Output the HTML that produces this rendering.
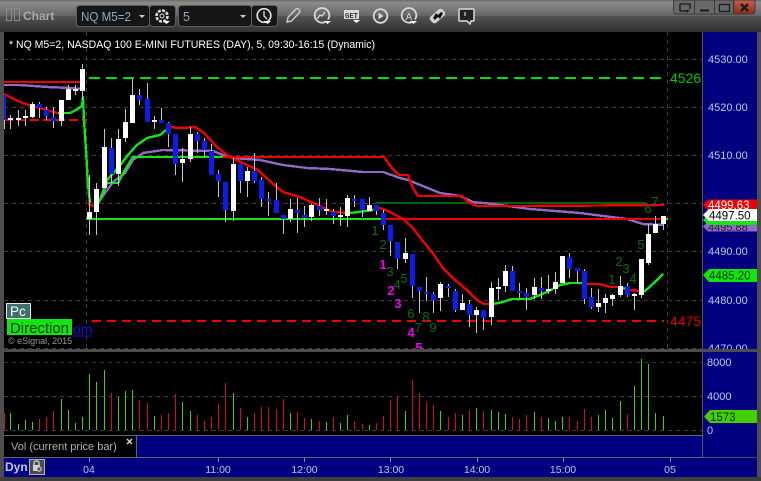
<!DOCTYPE html>
<html><head><meta charset="utf-8"><style>
html,body{margin:0;padding:0;background:#4a4a4a;width:761px;height:481px;overflow:hidden}
svg{display:block}
text{font-family:"Liberation Sans",sans-serif}
</style></head><body>
<svg width="761" height="481" viewBox="0 0 761 481" xmlns="http://www.w3.org/2000/svg">
<defs>
<linearGradient id="tb" x1="0" y1="0" x2="0" y2="1">
<stop offset="0" stop-color="#6a6a6a"/><stop offset=".08" stop-color="#8c8c8c"/><stop offset=".5" stop-color="#636363"/><stop offset=".51" stop-color="#525252"/><stop offset="1" stop-color="#303030"/>
</linearGradient>
<linearGradient id="cl" x1="0" y1="0" x2="0" y2="1"><stop offset="0" stop-color="#c8624c"/><stop offset="1" stop-color="#8c2c1c"/></linearGradient>
<clipPath id="pc"><rect x="4" y="32" width="698" height="317"/></clipPath>
</defs>
<rect width="761" height="481" fill="#4d4d4d"/>
<rect width="761" height="32" fill="url(#tb)"/>
<!-- title -->
<g fill="none" stroke="#8a8a8a" stroke-width="1"><rect x="6.5" y="8.5" width="5" height="12"/><rect x="14.5" y="8.5" width="5" height="12"/></g>
<text x="23" y="20" font-size="12" font-weight="bold" fill="#a8a8a8">Chart</text>
<!-- dropdowns -->
<g fill="#161616" stroke="#5e5e5e"><rect x="76.5" y="5.5" width="73" height="21" rx="3"/><rect x="149.5" y="5.5" width="26" height="21" rx="3"/><rect x="178.5" y="5.5" width="73" height="21" rx="3"/><rect x="251.5" y="5.5" width="26" height="21" rx="3"/></g>
<text x="81" y="21" font-size="12.500" fill="#8fa8c8" textLength="50" lengthAdjust="spacingAndGlyphs">NQ M5=2</text>
<text x="183" y="21" font-size="12.500" fill="#8fa8c8">5</text>
<path d="M139 15h6l-3 3zM240 15h6l-3 3z" fill="#ccc"/>
<!-- gear -->
<circle cx="162" cy="16" r="5.5" fill="none" stroke="#ddd" stroke-width="2.6" stroke-dasharray="3 1.3"/><circle cx="162" cy="16" r="2" fill="none" stroke="#ddd"/><path d="M163 21h7l-3.500 3z" fill="#fff"/>
<!-- clock -->
<circle cx="264" cy="15.500" r="6.800" fill="none" stroke="#e0e0e0" stroke-width="1.700"/><path d="M264 11v5l3 3" fill="none" stroke="#e0e0e0" stroke-width="1.300"/><path d="M264 21h7l-3.500 3z" fill="#fff"/>
<!-- pencil -->
<path d="M287 22l1-4.500 8-8.500q1.500-1 3 .5t.5 3l-8 8.500z" fill="none" stroke="#c8c8c8" stroke-width="1.500"/>
<!-- gauge -->
<path d="M325 22a7.300 7.300 0 1 1 3-2.500" fill="none" stroke="#d8d8d8" stroke-width="1.800"/><path d="M317 19l3-4 2 1 3-4" fill="none" stroke="#d8d8d8" stroke-width="1.300"/><path d="M324 21h7l-3.500 3z" fill="#fff"/>
<!-- GET -->
<rect x="344" y="10" width="15" height="9" fill="#d8d8d8"/><text x="345" y="18" font-size="7.500" font-weight="bold" style="font-family:'Liberation Mono',monospace" fill="#333" textLength="13" lengthAdjust="spacingAndGlyphs">GET</text><path d="M353 20h7l-3.500 3z" fill="#fff"/>
<!-- play -->
<circle cx="380.500" cy="16" r="6.800" fill="none" stroke="#d8d8d8" stroke-width="1.800"/><path d="M378.500 12.500l5 3.500-5 3.500z" fill="#d8d8d8"/>
<!-- A -->
<path d="M412 22a7.300 7.300 0 1 1 3-2.500" fill="none" stroke="#d8d8d8" stroke-width="1.800"/><text x="405.500" y="20" font-size="10" fill="#d8d8d8">A</text><path d="M410 21h7l-3.500 3z" fill="#fff"/>
<!-- diamond -->
<path d="M430 17l9-8q1.500-.5 3 0l3 3q.5 1.500 0 3l-9 8q-1.500.5-3 0l-3-3q-.5-1.500 0-3z" fill="#d0d0d0"/><path d="M435 20l3-3 2 2 3-6-2-1-3 3-2-2-3 5z" fill="#111"/>
<!-- comment -->
<path d="M460 9h13q1 0 1 1v10q0 1-1 1h-2l-1 3-3-3h-7q-1 0-1-1v-10q0-1 1-1z" fill="#222" stroke="#dcdcdc" stroke-width="1.500"/><path d="M465 12v4" stroke="#ddd" stroke-width="1.200"/>
<!-- window controls -->
<g stroke="#3c3c3c" fill="#686868"><path d="M673.500 0v10q0 4 4 4h56v-14z"/><path d="M694.500 0v14M714.500 0v14"/></g>
<path d="M734 0h21v10q0 4-4 4h-17z" fill="url(#cl)" stroke="#3c3c3c"/>
<g fill="none" stroke="#1a1a1a" stroke-width="1.300"><path d="M680 9v-5h10v5M680 4v7h5"/><path d="M700 10.500h9" stroke-width="2"/><rect x="719.500" y="4.500" width="10" height="7"/></g>
<path d="M684 10h6l-3 3z" fill="#222"/>
<path d="M741 4l7 7M748 4l-7 7" stroke="#1c1c1c" stroke-width="2.400"/>

<!-- main chart -->
<rect x="4" y="32" width="699" height="318" fill="#000"/>
<rect x="703" y="32" width="54" height="425" fill="#000080"/>
<rect x="702" y="32" width="1" height="425" fill="#555"/>
<g stroke="#3c3c3c" stroke-dasharray="4 4" fill="none">
<path d="M4 59.500H702M4 107.500H702M4 155.500H702M4 203.500H702M4 251.500H702M4 300.500H702M4 348.500H702M86.500 32V349M667.500 32V349"/>
</g>
<g clip-path="url(#pc)">
<g fill="none" stroke-linejoin="round" shape-rendering="crispEdges" stroke-width="2.400">
<path d="M89 78H664" stroke="#00e000" stroke-width="2" stroke-dasharray="11 6"/>
<path d="M4 120H87" stroke="#f00000" stroke-width="2" stroke-dasharray="9 4"/>
<path d="M92 321H664" stroke="#f00000" stroke-width="2" stroke-dasharray="9 6"/>
<path d="M376 203H646" stroke="#006400" stroke-width="2"/>
<path d="M4 85H20L48 87L70 88L82 89" stroke="#9468c8"/>
<path d="M4 82H82" stroke="#f00000"/>
<path d="M100 200L113 182L125 173L133 160L143 153L163 150L213 151L223 155L233 158L260 160L283 165L307 168L330 169L363 172L383 172L400 178L408 180L440 193L460 196L473 202L493 204L530 209L580 213L627 219L643 224L664 225" stroke="#9468c8"/>
<path d="M100 200L107 183L118 183L125 170L133 157H223" stroke="#14e614"/>
<path d="M86 219H382" stroke="#14e614"/>
<path d="M223 157H384L392 168L399 175H408L413 188L418 196H462L468 202L477 206H530L664 205" stroke="#f00000"/>
<path d="M382 219H664" stroke="#f00000"/>
<path d="M4 94L12 98L20 102L32 106L50 111L58 113" stroke="#f00000"/>
<path d="M58 113L70 113L76 110L82 106L83 97L84 120L86 150L88 185L90 203" stroke="#14e614"/>
<path d="M88 204L94 206" stroke="#f00000"/>
<path d="M98 204L100 200L107 180L118 168L128 155L137 145L147 138L160 135L166 130" stroke="#14e614"/>
<path d="M167 127L182 128L195 127L203 132L217 147L230 157L258 170L272 183L283 192L300 197L313 203L333 212L350 213" stroke="#f00000"/>
<path d="M350 213L373 210" stroke="#14e614"/>
<path d="M373 209L380 208L390 212L403 219L412 227L422 240L432 252L443 268L455 280L467 290L477 300L484 304H490" stroke="#f00000"/>
<path d="M490 304H493L503 302L512 299L530 299L547 292L560 285L570 283H584" stroke="#14e614"/>
<path d="M584 284H600L610 287L620 287" stroke="#f00000"/>
<path d="M620 287L626 289" stroke="#14e614"/>
<path d="M626 289L630 290L643 291" stroke="#f00000"/>
<path d="M643 291L645 291L655 282L663 274" stroke="#14e614"/>
<path d="M661 219H668" stroke="#14e614"/>
</g>
<!-- wicks -->
<path fill="none" stroke="#c4c4c4" stroke-width="1" d="M4.500 95V129M10.500 115V129M18.500 110V126M25.500 110V126M32.500 102V118M39.500 102V118M46.500 107V120M53.500 107V128M61.500 100V126M68.500 85V100M75.500 85V95M82.500 64V100M89.500 175V235M96.500 183V235M104.500 129V188M111.500 138V183M118.500 129V186M125.500 109V142M132.500 79V123M139.500 89V105M147.500 83V122M154.500 116V129M161.500 108V123M168.500 122V147M175.500 134V175M182.500 148V182M190.500 127V162M197.500 132V153M204.500 138V157M211.500 144V175M218.500 170V197M225.500 182V222M233.500 158V221M240.500 164V193M247.500 167V197M254.500 153V183M261.500 177V207M268.500 192V216M276.500 183V213M283.500 215V234M290.500 199V222M297.500 198V233M304.500 206V227M311.500 204V221M319.500 198V216M326.500 199V215M333.500 209V224M340.500 207V226M347.500 195V227M354.500 195V207M362.500 199V217M369.500 197V211M376.500 205V215M383.500 210V230M390.500 225V256M397.500 242V269M405.500 238V263M412.500 254V298M419.500 287V313M426.500 277V301M433.500 292V313M440.500 282V311M448.500 284V297M455.500 289V312M462.500 294V310M469.500 300V327M476.500 307V333M483.500 310V330M491.500 282V325M498.500 278V300M505.500 265V292M512.500 266V291M519.500 283V298M526.500 288V310M534.500 278V299M541.500 277V299M548.500 275V294M555.500 272V294M562.500 256V283M569.500 253V278M577.500 268V283M584.500 269V304M591.500 288V309M598.500 289V312M605.500 294V313M612.500 294V306M620.500 276V297M627.500 283V297M634.500 293V310M641.500 259V298M648.500 224V265M655.500 216V233M663.500 216V230"/>
<!-- white bodies -->
<path fill="#fff" d="M8 118h5v2h-5zM16 118h5v2h-5zM23 116h5v2h-5zM30 104h5v13h-5zM59 100h5v21h-5zM66 89h5v11h-5zM73 89h5v2h-5zM80 69h5v22h-5zM87 212h5v7h-5zM94 189h5v23h-5zM102 147h5v41h-5zM116 139h5v35h-5zM123 122h5v16h-5zM130 95h5v28h-5zM152 120h5v2h-5zM180 159h5v4h-5zM188 134h5v25h-5zM231 164h5v47h-5zM245 171h5v10h-5zM288 209h5v10h-5zM309 205h5v12h-5zM324 209h5v2h-5zM338 215h5v2h-5zM345 198h5v18h-5zM367 205h5v6h-5zM403 253h5v6h-5zM438 284h5v14h-5zM460 303h5v7h-5zM474 310h5v5h-5zM489 288h5v29h-5zM496 287h5v2h-5zM503 271h5v15h-5zM532 287h5v8h-5zM546 289h5v2h-5zM553 282h5v7h-5zM560 256h5v27h-5zM596 303h5v4h-5zM603 298h5v5h-5zM610 295h5v4h-5zM618 286h5v9h-5zM632 294h5v2h-5zM639 259h5v36h-5zM646 234h5v29h-5zM653 224h5v9h-5zM661 216h5v8h-5z"/>
<!-- blue bodies -->
<path fill="#0a1ee6" d="M4 95h2v25h-2zM37 104h5v4h-5zM44 110h5v6h-5zM51 117h5v4h-5zM109 148h5v26h-5zM137 95h5v5h-5zM145 99h5v23h-5zM159 120h5v3h-5zM166 123h5v11h-5zM173 134h5v30h-5zM195 134h5v7h-5zM202 141h5v9h-5zM209 151h5v24h-5zM216 174h5v7h-5zM223 182h5v28h-5zM238 164h5v17h-5zM252 171h5v10h-5zM259 180h5v19h-5zM266 199h5v2h-5zM274 200h5v13h-5zM281 215h5v4h-5zM295 210h5v3h-5zM302 215h5v3h-5zM317 206h5v4h-5zM331 212h5v4h-5zM352 199h5v2h-5zM360 199h5v11h-5zM374 205h5v6h-5zM381 213h5v12h-5zM388 225h5v16h-5zM395 242h5v17h-5zM410 254h5v32h-5zM417 287h5v4h-5zM424 292h5v2h-5zM431 294h5v6h-5zM446 286h5v2h-5zM453 291h5v19h-5zM467 304h5v11h-5zM481 310h5v8h-5zM510 271h5v20h-5zM517 291h5v2h-5zM524 293h5v4h-5zM539 288h5v3h-5zM567 257h5v12h-5zM575 268h5v3h-5zM582 271h5v28h-5zM589 297h5v10h-5zM625 286h5v9h-5z"/>
<!-- numbers -->
<g font-size="13" fill="#0c6e0c" text-anchor="middle">
<text x="375" y="235">1</text><text x="383" y="249">2</text><text x="390" y="276">3</text><text x="397" y="289">4</text><text x="404" y="283">5</text><text x="411" y="318">6</text><text x="418" y="332">7</text><text x="426" y="321">8</text><text x="433" y="332">9</text>
<text x="612" y="284">1</text><text x="619" y="266">2</text><text x="626" y="273">3</text><text x="633" y="283">4</text><text x="641" y="249">5</text><text x="648" y="213">6</text><text x="655" y="206">7</text>
</g>
<g font-size="13" font-weight="bold" fill="#f000f0" text-anchor="middle">
<text x="383" y="269">1</text><text x="391" y="295">2</text><text x="398" y="308">3</text><text x="411" y="337">4</text><text x="419" y="352">5</text>
</g>
<text x="670" y="83" font-size="14" fill="#00c800">4526</text>
<text x="670" y="326" font-size="14" fill="#e00000">4475</text>
</g>
<text x="9" y="48" font-size="11" fill="#fff" textLength="366" lengthAdjust="spacingAndGlyphs">* NQ M5=2, NASDAQ 100 E-MINI FUTURES (DAY), 5, 09:30-16:15 (Dynamic)</text>
<!-- Pc / Direction -->
<rect x="6.500" y="303.500" width="24" height="15" fill="#3e7070" stroke="#e8e8e8"/>
<text x="10" y="316" font-size="13.500" fill="#fff">Pc</text>
<rect x="7" y="319" width="65" height="16" fill="#0ee60e"/>
<text x="10" y="333" font-size="15" fill="#003000" textLength="59" lengthAdjust="spacingAndGlyphs">Direction</text>
<text x="73" y="334" font-size="14" fill="#1010f0">om</text>
<path d="M73 336H91" stroke="#1010f0"/>
<text x="8" y="344" font-size="9" fill="#9a9a9a">© eSignal, 2015</text>
<!-- price axis labels -->
<g font-size="11" fill="#c4c4e4">
<text x="708" y="63">4530.00</text><text x="708" y="111">4520.00</text><text x="708" y="159">4510.00</text><text x="708" y="255">4490.00</text><text x="708" y="304">4480.00</text><text x="708" y="352">4470.00</text>
</g>
<path d="M703 226.500l5-5h49v10h-49z" fill="#9468c8"/>
<text x="708" y="231" font-size="11" fill="#222">4495.88</text>
<path d="M703 220l5-5h49v10h-49z" fill="#14e614"/>
<path d="M703 205l5-5.500h49v11h-49z" fill="#f00000"/>
<text x="708" y="209" font-size="11.500" fill="#fff">4499.63</text>
<path d="M703 215l6-6h48v12h-48z" fill="#fff"/>
<text x="709" y="219.500" font-size="11.500" fill="#000">4497.50</text>
<path d="M703 275l6-6h48v13h-48z" fill="#0ee60e"/>
<text x="709" y="279.500" font-size="11.500" fill="#003000">4485.20</text>
<!-- volume pane -->
<rect x="4" y="352" width="698" height="84" fill="#000"/>
<rect x="4" y="349" width="753" height="3" fill="#4c4c4c"/>
<g stroke="#3c3c3c" stroke-dasharray="4 4" fill="none"><path d="M4 362.500H702M4 396.500H702M4 430.500H702"/></g>
<path fill="none" stroke="#d80c0c" d="M4.500 413V430M39.500 419V430M46.500 417V430M53.500 411V430M111.500 393V430M139.500 400V430M147.500 403V430M161.500 415V430M168.500 413V430M175.500 394V430M197.500 415V430M204.500 421V430M211.500 417V430M218.500 404V430M225.500 383V430M240.500 408V430M254.500 413V430M261.500 407V430M268.500 407V430M276.500 409V430M283.500 399V430M297.500 412V430M304.500 418V430M319.500 421V430M333.500 417V430M354.500 421V430M362.500 424V430M376.500 423V430M383.500 416V430M390.500 400V430M397.500 397V430M412.500 380V430M419.500 393V430M426.500 402V430M433.500 405V430M448.500 417V430M455.500 413V430M469.500 410V430M483.500 411V430M512.500 417V430M519.500 419V430M526.500 415V430M541.500 417V430M569.500 417V430M577.500 421V430M584.500 409V430M591.500 417V430M627.500 414V430"/>
<path fill="none" stroke="#44d000" d="M10.500 413V430M18.500 424V430M25.500 420V430M32.500 422V430M61.500 399V430M68.500 410V430M75.500 423V430M82.500 417V430M89.500 374V430M96.500 382V430M104.500 370V430M118.500 397V430M125.500 391V430M132.500 390V430M154.500 416V430M182.500 402V430M190.500 411V430M233.500 393V430M247.500 417V430M290.500 413V430M311.500 419V430M326.500 422V430M340.500 423V430M347.500 415V430M369.500 425V430M405.500 411V430M440.500 411V430M462.500 415V430M476.500 408V430M491.500 410V430M498.500 412V430M505.500 414V430M534.500 412V430M548.500 418V430M555.500 421V430M562.500 417V430M598.500 415V430M605.500 410V430M612.500 418V430M620.500 401V430M634.500 386V430M641.500 359V430M648.500 364V430M655.500 413V430M663.500 416V430"/>
<rect x="4" y="435" width="699" height="1" fill="#666"/>
<g font-size="11" fill="#c4c4e4"><text x="707" y="366">8000</text><text x="707" y="400">4000</text><text x="707" y="434">0</text></g>
<path d="M704 416.500l6-6.500h47v13h-47z" fill="#44d000"/>
<text x="710" y="421" font-size="11.500" fill="#0a2a00">1573</text>
<!-- legend row -->
<rect x="4" y="436" width="132" height="21" fill="#000"/>
<rect x="136" y="436" width="566" height="21" fill="#000080"/>
<rect x="136" y="436" width="1" height="21" fill="#666"/>
<text x="11" y="450" font-size="11" fill="#b8b0a0">Vol (current price bar)</text>
<path d="M127 439l5 5M132 439l-5 5" stroke="#d0d0d0" stroke-width="1.500"/>
<!-- x axis -->
<rect x="4" y="458" width="753" height="19" fill="#000080"/>
<rect x="4" y="457" width="699" height="1" fill="#666"/>
<path d="M89.500 458v4M218.500 458v4M304.500 458v4M390.500 458v4M477.500 458v4M563.500 458v4M670.500 458v4" stroke="#888"/>
<text x="5" y="471" font-size="12" font-weight="bold" fill="#c0c8e8">Dyn</text>
<rect x="29.500" y="459.500" width="15" height="15" fill="#4c4c4c" stroke="#b0b0b0"/>
<path d="M34 465v-2q0-2 2.500-2t2.500 2v2" fill="none" stroke="#d0d0d0" stroke-width="1.300"/><rect x="33" y="465" width="7" height="6" fill="#d0d0d0"/><circle cx="39" cy="469" r="2.200" fill="#555" stroke="#ddd"/>
<g font-size="10.500" fill="#c4c4e4" text-anchor="middle">
<text x="89" y="473">04</text><text x="218" y="473">11:00</text><text x="304.500" y="473">12:00</text><text x="391" y="473">13:00</text><text x="477" y="473">14:00</text><text x="563" y="473">15:00</text><text x="670" y="473">05</text>
</g>
<rect x="0" y="32" width="4" height="449" fill="#4d4d4d"/>
<rect x="757" y="32" width="4" height="449" fill="#4d4d4d"/>
<rect x="0" y="477" width="761" height="4" fill="#3e3e3e"/>
</svg>
</body></html>
